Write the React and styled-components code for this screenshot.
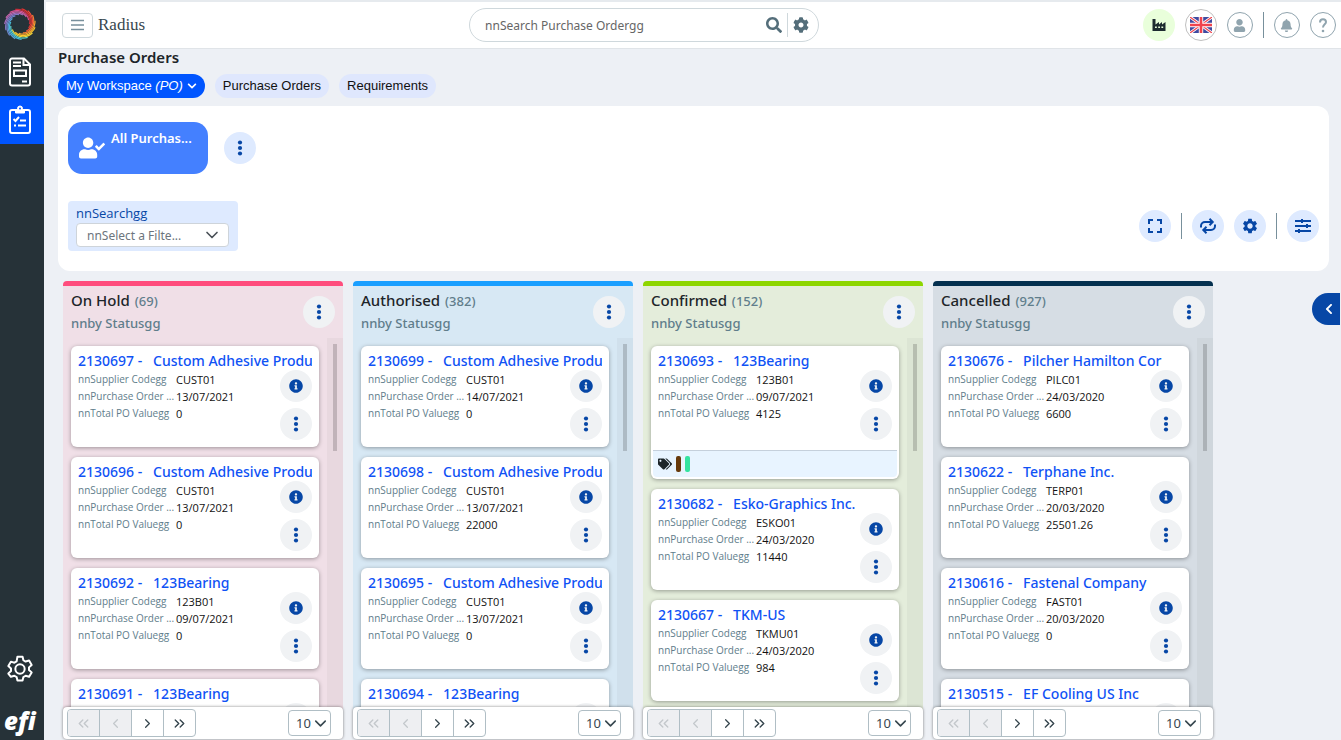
import React from "react";
import styled, { createGlobalStyle, css } from "styled-components";
import {
  FaUserCheck, FaInfoCircle, FaTags, FaSearch, FaCog, FaBell,
  FaUser, FaChevronLeft, FaChevronDown,
} from "react-icons/fa";
import { MdSettings, MdFullscreen } from "react-icons/md";
import { LuChevronDown, LuChevronRight, LuChevronLeft, LuChevronsLeft, LuChevronsRight } from "react-icons/lu";

const Global = createGlobalStyle`
  *, *::before, *::after { box-sizing: border-box; }
  body { margin: 0; font-family: "Noto Sans", "Open Sans", sans-serif; color: #1d2529; background: #edf0f5; }
  button, input, select { font: inherit; color: inherit; margin: 0; padding: 0; }
  button { border: 0; background: none; cursor: pointer; }
  h1, h2, h3, p, dl, dd { margin: 0; }
  a { color: inherit; text-decoration: none; }
  svg { display: block; flex: none; }
`;

const Shell = styled.div`
  display: grid;
  grid-template-columns: 44px minmax(0, 1fr);
  height: 100vh;
  overflow: hidden;
`;

const Sidebar = styled.nav`
  display: flex;
  flex-direction: column;
  background: #263238;
  color: #fff;
`;

const SideLink = styled.a`
  display: flex;
  align-items: center;
  justify-content: center;
  height: 48px;
  padding-right: 4px;
  background: ${(p) => (p.$active ? "#0055ff" : "transparent")};
`;

const Spacer = styled.div`
  flex: 1;
`;

const EfiMark = styled.p`
  height: 47px;
  padding: 14px 0 0 4px;
  font: italic 800 24px/28px "Open Sans", sans-serif;
`;

const Page = styled.div`
  display: flex;
  flex-direction: column;
  min-width: 0;
  min-height: 0;
`;

const Header = styled.header`
  display: flex;
  align-items: center;
  justify-content: space-between;
  flex: none;
  height: 49px;
  margin-left: 2px;
  padding: 0 5px 0 16px;
  background: #fff;
  border-top: 2px solid #e6eaee;
  border-bottom: 1px solid #e0e4e8;
`;

const Group = styled.div`
  display: flex;
  align-items: center;
  gap: ${(p) => p.$gap}px;
`;

const MenuButton = styled.button`
  display: grid;
  place-items: center;
  width: 31px;
  height: 25px;
  border: 1px solid #cfd8dc;
  border-radius: 4px;
`;

const Brand = styled.span`
  font: 17px/24px "Liberation Serif", serif;
  color: #37474f;
`;

const SearchBox = styled.div`
  display: flex;
  align-items: center;
  width: 350px;
  height: 34px;
  padding: 0 4px 0 15px;
  border: 1px solid #cfd8dc;
  border-radius: 17px;
  color: #546e7a;
`;

const SearchInput = styled.input`
  flex: 1;
  min-width: 0;
  border: 0;
  outline: 0;
  font-size: 12px;
  background: none;
  &::placeholder { color: #666; opacity: 1; }
`;

const Divider = styled.span`
  width: 1px;
  height: ${(p) => p.$h}px;
  background: ${(p) => p.$color || "#78909c"};
`;

const SearchAction = styled.button`
  padding: 0 5px;
`;

const PlantButton = styled.button`
  display: grid;
  place-items: center;
  width: 32px;
  height: 32px;
  border-radius: 50%;
  background: #e9ffdb;
`;

const RingButton = styled.button`
  display: grid;
  place-items: center;
  width: ${(p) => p.$size}px;
  height: ${(p) => p.$size}px;
  border: 1px solid ${(p) => p.$ring || "#90a4ae"};
  border-radius: 50%;
  color: #90a4ae;
`;

const Content = styled.main`
  display: flex;
  flex-direction: column;
  flex: 1;
  min-height: 0;
  padding: 0 12px 0 14px;
`;

const Title = styled.h1`
  font: 600 15px/16px "Noto Sans", sans-serif;
  margin-bottom: 9px;
`;

const Tabs = styled.div`
  display: flex;
  gap: 10px;
  margin-bottom: 8px;
`;

const Tab = styled.button`
  display: flex;
  align-items: center;
  gap: 4px;
  height: 24px;
  padding: 0 8px;
  border-radius: 12px;
  font: 13px/24px "Liberation Sans", Arial, sans-serif;
  letter-spacing: normal;
  background: ${(p) => (p.$active ? "#0055ff" : "#dfe7fd")};
  color: ${(p) => (p.$active ? "#fff" : "#111")};
`;

const Panel = styled.section`
  display: flex;
  flex-direction: column;
  justify-content: space-between;
  flex: none;
  height: 165px;
  padding: 16px 10px 20px;
  border-radius: 12px;
  background: #fff;
`;

const PanelRow = styled.div`
  display: flex;
  align-items: center;
  justify-content: ${(p) => (p.$spread ? "space-between" : "flex-start")};
  gap: 16px;
`;

const ViewTile = styled.button`
  display: flex;
  align-items: center;
  gap: 6px;
  width: 140px;
  height: 52px;
  padding: 0 11px;
  border-radius: 14px;
  background: #4480ff;
  color: #fff;
  text-align: left;
`;

const ViewName = styled.span`
  align-self: flex-start;
  padding-top: 7px;
  font-size: 13px;
  font-weight: 600;
  line-height: 18px;
  white-space: nowrap;
`;

const RoundButton = styled.button`
  display: grid;
  place-items: center;
  flex: none;
  width: 32px;
  height: 32px;
  border-radius: 50%;
  color: #0747a6;
  background: ${(p) => (p.$muted ? "#f0f2f4" : "#deeaff")};
`;

const FilterBox = styled.div`
  display: flex;
  flex-direction: column;
  width: 170px;
  height: 50px;
  padding: 2px 9px 4px 8px;
  border-radius: 4px;
  background: #deeaff;
`;

const FilterLabel = styled.label`
  font: 13px/20px "Open Sans", sans-serif;
  color: #0747a6;
`;

const SelectWrap = styled.div`
  display: grid;
  align-items: center;
  width: ${(p) => p.$width};
  & > * { grid-area: 1 / 1; }
  & > svg { justify-self: end; margin-right: ${(p) => p.$inset}px; pointer-events: none; }
`;

const Select = styled.select`
  appearance: none;
  width: 100%;
  height: ${(p) => p.$h}px;
  padding-left: ${(p) => p.$pad}px;
  border: 1px solid ${(p) => p.$edge};
  border-radius: 4px;
  background: #fff;
  color: ${(p) => p.$color};
  font-size: ${(p) => p.$size}px;
`;

const BoardArea = styled.div`
  display: flex;
  justify-content: space-between;
  flex: 1;
  min-height: 0;
  margin-right: -12px;
  padding: 10px 1px 1px 5px;
`;

const Board = styled.div`
  display: flex;
  gap: 10px;
  min-height: 0;
`;

const DrawerButton = styled.button`
  display: flex;
  align-items: center;
  justify-content: center;
  flex: none;
  width: 28px;
  height: 32px;
  margin-top: 12px;
  padding-left: 6px;
  border-radius: 16px 0 0 16px;
  background: #0747a6;
  color: #fff;
`;

const Column = styled.section`
  display: flex;
  flex-direction: column;
  width: 280px;
  min-height: 0;
  border-top: 5px solid ${(p) => p.$accent};
  border-radius: 4px;
  background: ${(p) => p.$tint};
`;

const ColumnHead = styled.header`
  display: flex;
  justify-content: space-between;
  flex: none;
  height: 52px;
  padding: 3px 8px 0;
`;

const ColumnTitle = styled.h2`
  font: 500 15px/22px "Noto Sans", sans-serif;
`;

const Count = styled.span`
  margin-left: 1px;
  font-size: 13px;
  color: #607d8b;
`;

const ColumnSub = styled.p`
  font: 500 13px/22px "Noto Sans", sans-serif;
  color: #607d8b;
`;

const HeadAction = styled.div`
  padding-top: 7px;
`;

const Scroller = styled.div`
  display: flex;
  flex: 1;
  min-height: 0;
  overflow: hidden;
`;

const Cards = styled.div`
  display: flex;
  flex-direction: column;
  gap: 10px;
  flex: 1;
  min-width: 0;
  padding: 8px;
`;

const Track = styled.div`
  width: 16px;
  padding: 6px;
  background: rgba(0, 0, 0, 0.03);
`;

const Thumb = styled.div`
  height: 107px;
  background: rgba(0, 0, 0, 0.17);
`;

const Card = styled.article`
  flex: none;
  border-radius: 6px;
  background: #fff;
  box-shadow: 0 1px 4px rgba(0, 0, 0, 0.35);
`;

const CardMain = styled.div`
  height: 101px;
  padding: 5px 7px 0;
`;

const CardTitle = styled.h3`
  height: 20px;
  overflow: hidden;
  font: 500 14px/20px "Noto Sans", sans-serif;
  color: #0f52f5;
  white-space: pre;
`;

const CardBody = styled.div`
  display: flex;
  justify-content: space-between;
`;

const Fields = styled.dl`
  font: 11px/17px "Open Sans", sans-serif;
`;

const Field = styled.div`
  display: flex;
  white-space: nowrap;
`;

const FieldName = styled.dt`
  width: 98px;
  font-size: 10px;
  color: #607d8b;
`;

const FieldValue = styled.dd`
  color: #111;
`;

const CardActions = styled.div`
  display: flex;
  flex-direction: column;
  gap: 6px;
  margin-top: -1px;
`;

const TagBar = styled.div`
  display: flex;
  align-items: center;
  gap: 4px;
  height: 27px;
  margin: 0 2px;
  padding: 0 5px;
  border-top: 1px solid #c5d0dc;
  border-radius: 0 0 4px 4px;
  background: #e8f4ff;
`;

const TagArea = styled.div`
  padding: 3px 0 2px;
`;

const TagSwatch = styled.span`
  width: 5px;
  height: 16px;
  border-radius: 2px;
  background: ${(p) => p.$color};
`;

const Pager = styled.footer`
  display: flex;
  align-items: center;
  justify-content: space-between;
  flex: none;
  height: 32px;
  padding: 0 12px 0 4px;
  border-radius: 4px;
  background: #fff;
  box-shadow: 0 0 3px rgba(0, 0, 0, 0.5);
`;

const PagerButtons = styled.div`
  display: flex;
  border: 1px solid #b0bec5;
  border-radius: 4px;
  overflow: hidden;
`;

const PagerButton = styled.button`
  display: grid;
  place-items: center;
  width: 32px;
  height: 26px;
  color: #37474f;
  &:first-child { width: 31px; }
  & + & { border-left: 1px solid #b0bec5; }
  ${(p) => p.disabled && css`
    background: #eeeff2;
    color: #c4c8cc;
  `}
`;

const Kebab = () => (
  <svg width="6" height="16" viewBox="0 0 6 16" fill="currentColor" aria-hidden="true">
    <circle cx="3" cy="2.5" r="2.1" />
    <circle cx="3" cy="8" r="2.1" />
    <circle cx="3" cy="13.5" r="2.1" />
  </svg>
);

const strand = (start) => {
  const points = [];
  for (let i = 0; i <= 12; i += 1) {
    const a = ((start + i * 9) * Math.PI) / 180;
    const r = 15.4 - i * 0.5;
    points.push(`${(16 + r * Math.cos(a)).toFixed(2)} ${(16 + r * Math.sin(a)).toFixed(2)}`);
  }
  return `M${points.join("L")}`;
};
const swirlColors = [
  "#f0503c", "#f47b35", "#fba52f", "#fdc62b", "#f5d93a", "#5ccfc6", "#46bcd8", "#5aa5dc",
  "#6b86cc", "#8577c4", "#a86fbf", "#c966ac", "#d95090", "#c62f3c", "#e5342f",
];
const Swirl = () => (
  <svg width="32" height="32" viewBox="0 0 32 32" fill="none" strokeWidth="1.2" aria-hidden="true">
    {swirlColors.map((c, i) => <path key={c} stroke={c} d={strand(i * 24 - 60)} />)}
  </svg>
);

const DocumentIcon = () => (
  <svg width="24" height="30" viewBox="0 0 24 30" fill="none" stroke="#fff" strokeWidth="2" aria-hidden="true">
    <path d="M4 1.5h12l6 6v19a2 2 0 0 1-2 2H4a2 2 0 0 1-2-2v-23a2 2 0 0 1 2-2z" />
    <path d="M15.5 2v6H22M5 5.5h8M5 9h8M14 24.500h5" />
    <path d="M6 13.500h12v5.500H6z" />
  </svg>
);

const ClipboardIcon = () => (
  <svg width="24" height="30" viewBox="0 0 24 30" fill="none" stroke="#fff" strokeWidth="2" aria-hidden="true">
    <rect x="2" y="5" width="20" height="23" rx="2" />
    <path d="M7.500 5h9v3h-9z" fill="#fff" strokeWidth="1" />
    <circle cx="12" cy="3.500" r="2.500" fill="#fff" strokeWidth="1" />
    <circle cx="12" cy="3.500" r="1" fill="#0055ff" stroke="none" />
    <path d="M5.500 14l2 2 3.500-4M12 15.500h6M6 20.500h2M10 20.500h8" />
  </svg>
);

const GearOutline = () => (
  <svg width="28" height="28" viewBox="0 0 24 24" fill="none" stroke="#fff" strokeWidth="1.700" strokeLinejoin="round" aria-hidden="true">
    <path d="M9.800 1.500h4.400l.7 3 1.900 1.100 3-.9 2.200 3.800-2.300 2.100v2.200l2.300 2.100-2.200 3.800-3-.9-1.900 1.100-.7 3H9.800l-.7-3-1.900-1.100-3 .9L2 15.900l2.300-2.100v-2.200L2 9.500l2.200-3.800 3 .9 1.900-1.100z" />
    <circle cx="12" cy="12" r="4" />
  </svg>
);

const Factory = () => (
  <svg width="14" height="12" viewBox="0 0 14 12" aria-hidden="true">
    <path fill="#1d2b30" d="M0.500 0h3v5.500L7 3v2.500L10 3v2.500L13.500 3v9h-13z" />
    <path fill="#e9ffdb" d="M3 7.500h1.800v1.500H3zM6.200 7.500H8v1.500H6.200zM9.400 7.500h1.800v1.500H9.400z" />
  </svg>
);

const Flag = () => (
  <svg width="22" height="16" viewBox="0 0 22 16" aria-hidden="true">
    <path fill="#3f4aa0" d="M0 0h22v16H0z" />
    <path stroke="#fff" strokeWidth="3" d="M0 0l22 16M22 0L0 16" />
    <path stroke="#f0444e" strokeWidth="1.200" d="M0 0l22 16M22 0L0 16" />
    <path stroke="#fff" strokeWidth="4.400" d="M11 0v16M0 8h22" />
    <path stroke="#f0444e" strokeWidth="2.600" d="M11 0v16M0 8h22" />
  </svg>
);

const MenuLines = () => (
  <svg width="13" height="12" viewBox="0 0 13 12" stroke="#78909c" strokeWidth="1.500" aria-hidden="true">
    <path d="M0 1.500h13M0 6h13M0 10.500h13" />
  </svg>
);

const Repeat = () => (
  <svg width="18" height="16" viewBox="0 0 18 16" fill="none" stroke="currentColor" strokeWidth="2" aria-hidden="true">
    <path d="M2 9.500V8a4 4 0 0 1 4-4h7M10.500 0.800L13.700 4l-3.200 3.200" />
    <path d="M16 6.500V8a4 4 0 0 1-4 4H5M7.500 8.800L4.300 12l3.200 3.200" />
  </svg>
);

const Sliders = () => (
  <svg width="16" height="14" viewBox="0 0 16 14" stroke="currentColor" strokeWidth="2" aria-hidden="true">
    <path d="M0 2h16M0 7h16M0 12h16M7 0v4M12 5v4M4 10v4" />
  </svg>
);

const Question = () => (
  <svg width="10" height="15" viewBox="0 0 10 15" fill="none" stroke="currentColor" strokeWidth="2" aria-hidden="true">
    <path d="M2 4.500C2 2.500 3.200 1.300 5 1.300s3 1.100 3 2.800c0 2.100-3 2.500-3 5.400" />
    <circle cx="5" cy="13" r="1.300" fill="currentColor" stroke="none" />
  </svg>
);

const columns = [
  {
    name: "On Hold", count: 69, accent: "#ff4d7d", tint: "#f0dfe7",
    cards: [
      ["2130697", "Custom Adhesive Produ", "CUST01", "13/07/2021", "0"],
      ["2130696", "Custom Adhesive Produ", "CUST01", "13/07/2021", "0"],
      ["2130692", "123Bearing", "123B01", "09/07/2021", "0"],
      ["2130691", "123Bearing", "123B01", "09/07/2021", "0"],
    ],
  },
  {
    name: "Authorised", count: 382, accent: "#1a9fff", tint: "#d7e8f4",
    cards: [
      ["2130699", "Custom Adhesive Produ", "CUST01", "14/07/2021", "0"],
      ["2130698", "Custom Adhesive Produ", "CUST01", "13/07/2021", "22000"],
      ["2130695", "Custom Adhesive Produ", "CUST01", "13/07/2021", "0"],
      ["2130694", "123Bearing", "123B01", "13/07/2021", "0"],
    ],
  },
  {
    name: "Confirmed", count: 152, accent: "#8ed600", tint: "#e4eddb",
    cards: [
      ["2130693", "123Bearing", "123B01", "09/07/2021", "4125", ["#66390b", "#34e3a0"]],
      ["2130682", "Esko-Graphics Inc.", "ESKO01", "24/03/2020", "11440"],
      ["2130667", "TKM-US", "TKMU01", "24/03/2020", "984"],
    ],
  },
  {
    name: "Cancelled", count: 927, accent: "#04304f", tint: "#d6dde4",
    cards: [
      ["2130676", "Pilcher Hamilton Cor", "PILC01", "24/03/2020", "6600"],
      ["2130622", "Terphane Inc.", "TERP01", "20/03/2020", "25501.26"],
      ["2130616", "Fastenal Company", "FAST01", "20/03/2020", "0"],
      ["2130515", "EF Cooling US Inc", "EFCO01", "20/03/2020", "0"],
    ],
  },
];

function OrderCard({ data }) {
  const [id, supplier, code, date, total, tags] = data;
  return (
    <Card>
      <CardMain>
        <CardTitle>{`${id} -   ${supplier}`}</CardTitle>
        <CardBody>
          <Fields>
            <Field><FieldName>nnSupplier Codegg</FieldName><FieldValue>{code}</FieldValue></Field>
            <Field><FieldName>nnPurchase Order ...</FieldName><FieldValue>{date}</FieldValue></Field>
            <Field><FieldName>nnTotal PO Valuegg</FieldName><FieldValue>{total}</FieldValue></Field>
          </Fields>
          <CardActions>
            <RoundButton $muted aria-label="Order details"><FaInfoCircle size={14} /></RoundButton>
            <RoundButton $muted aria-label="Order actions"><Kebab /></RoundButton>
          </CardActions>
        </CardBody>
      </CardMain>
      {tags && (
        <TagArea>
          <TagBar>
            <FaTags size={14} color="#1d2529" />
            {tags.map((c) => <TagSwatch key={c} $color={c} />)}
          </TagBar>
        </TagArea>
      )}
    </Card>
  );
}

function StatusColumn({ data }) {
  return (
    <Column $accent={data.accent} $tint={data.tint}>
      <ColumnHead>
        <div>
          <ColumnTitle>{data.name} <Count>({data.count})</Count></ColumnTitle>
          <ColumnSub>nnby Statusgg</ColumnSub>
        </div>
        <HeadAction>
          <RoundButton $muted aria-label={`${data.name} actions`}><Kebab /></RoundButton>
        </HeadAction>
      </ColumnHead>
      <Scroller>
        <Cards>{data.cards.map((c) => <OrderCard key={c[0]} data={c} />)}</Cards>
        <Track><Thumb /></Track>
      </Scroller>
      <Pager>
        <PagerButtons>
          <PagerButton disabled aria-label="First page"><LuChevronsLeft size={17} /></PagerButton>
          <PagerButton disabled aria-label="Previous page"><LuChevronLeft size={15} /></PagerButton>
          <PagerButton aria-label="Next page"><LuChevronRight size={15} /></PagerButton>
          <PagerButton aria-label="Last page"><LuChevronsRight size={17} /></PagerButton>
        </PagerButtons>
        <SelectWrap $width="43px" $inset={1}>
          <Select $h={26} $pad={7} $edge="#b0bec5" $color="#37474f" $size={13} aria-label="Rows per page">
            <option>10</option>
          </Select>
          <LuChevronDown size={19} color="#37474f" />
        </SelectWrap>
      </Pager>
    </Column>
  );
}

export default function App() {
  return (
    <>
      <Global />
      <Shell>
        <Sidebar aria-label="Main">
          <SideLink href="#" aria-label="Home"><Swirl /></SideLink>
          <SideLink href="#" aria-label="Documents"><DocumentIcon /></SideLink>
          <SideLink href="#" aria-label="Purchase orders" $active><ClipboardIcon /></SideLink>
          <Spacer />
          <SideLink href="#" aria-label="Settings"><GearOutline /></SideLink>
          <EfiMark>efi</EfiMark>
        </Sidebar>
        <Page>
          <Header>
            <Group $gap={5}>
              <MenuButton aria-label="Toggle menu"><MenuLines /></MenuButton>
              <Brand>Radius</Brand>
            </Group>
            <SearchBox>
              <SearchInput aria-label="Search purchase orders" placeholder="nnSearch Purchase Ordergg" />
              <SearchAction aria-label="Search"><FaSearch size={16} /></SearchAction>
              <Divider $h={24} $color="#cfd8dc" />
              <SearchAction aria-label="Search settings"><FaCog size={16} /></SearchAction>
            </SearchBox>
            <Group $gap={10}>
              <PlantButton aria-label="Plant"><Factory /></PlantButton>
              <RingButton $size={32} $ring="#c0c0c0" aria-label="Language"><Flag /></RingButton>
              <RingButton $size={26} aria-label="Account"><FaUser size={13} /></RingButton>
              <Divider $h={26} />
              <RingButton $size={26} aria-label="Notifications"><FaBell size={13} /></RingButton>
              <RingButton $size={26} aria-label="Help"><Question /></RingButton>
            </Group>
          </Header>
          <Content>
            <Title>Purchase Orders</Title>
            <Tabs>
              <Tab $active><span>My Workspace <em>(PO)</em></span><FaChevronDown size={10} /></Tab>
              <Tab>Purchase Orders</Tab>
              <Tab>Requirements</Tab>
            </Tabs>
            <Panel>
              <PanelRow>
                <ViewTile><FaUserCheck size={26} /><ViewName>All Purchas...</ViewName></ViewTile>
                <RoundButton aria-label="View actions"><Kebab /></RoundButton>
              </PanelRow>
              <PanelRow $spread>
                <FilterBox>
                  <FilterLabel htmlFor="filter">nnSearchgg</FilterLabel>
                  <SelectWrap $width="100%" $inset={7}>
                    <Select id="filter" $h={24} $pad={10} $edge="#ced4da" $color="#6c757d" $size={12}>
                      <option>nnSelect a Filte...</option>
                    </Select>
                    <LuChevronDown size={20} color="#495057" />
                  </SelectWrap>
                </FilterBox>
                <Group $gap={10}>
                  <RoundButton aria-label="Full screen"><MdFullscreen size={24} /></RoundButton>
                  <Divider $h={26} />
                  <RoundButton aria-label="Refresh"><Repeat /></RoundButton>
                  <RoundButton aria-label="Settings"><MdSettings size={18} /></RoundButton>
                  <Divider $h={26} />
                  <RoundButton aria-label="Filters"><Sliders /></RoundButton>
                </Group>
              </PanelRow>
            </Panel>
            <BoardArea>
              <Board>{columns.map((c) => <StatusColumn key={c.name} data={c} />)}</Board>
              <DrawerButton aria-label="Open drawer"><FaChevronLeft size={12} /></DrawerButton>
            </BoardArea>
          </Content>
        </Page>
      </Shell>
    </>
  );
}
